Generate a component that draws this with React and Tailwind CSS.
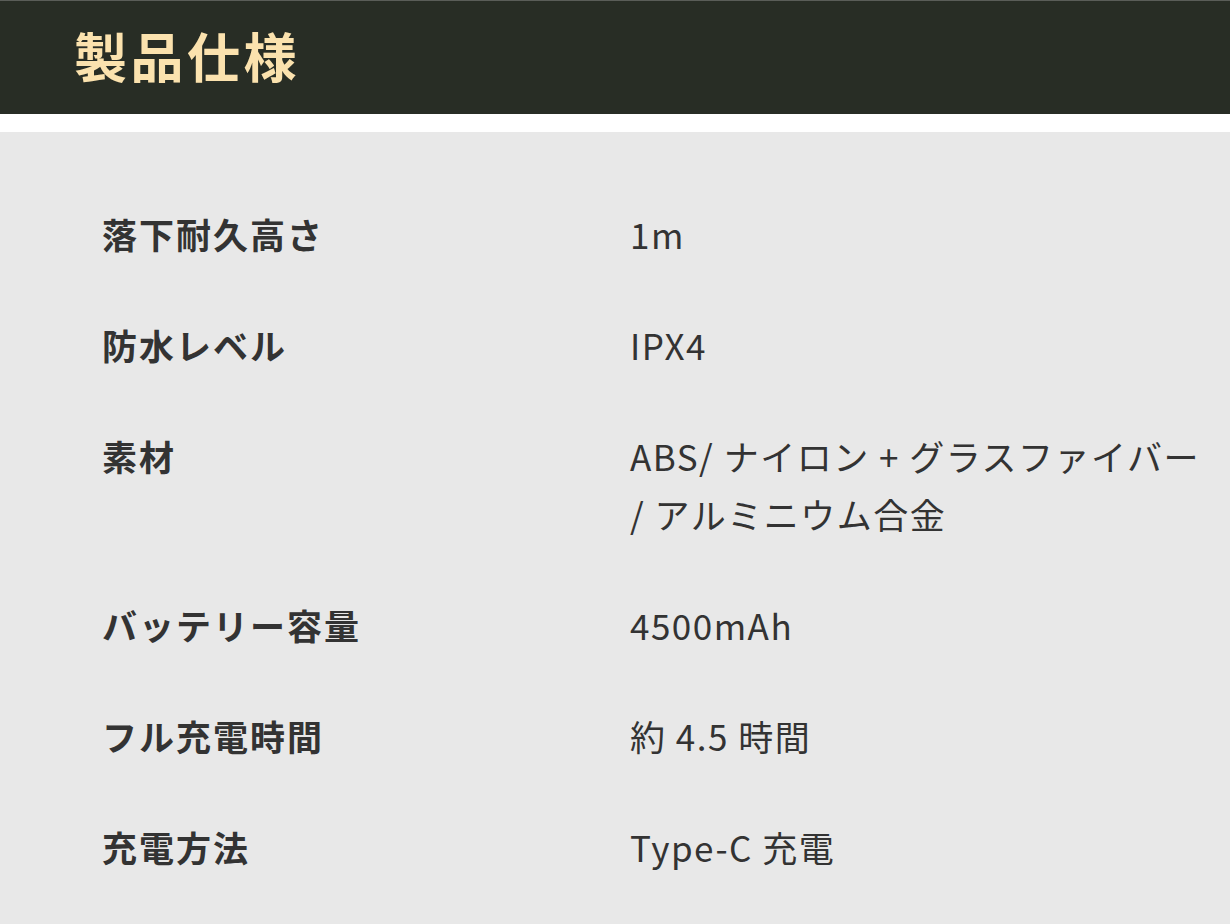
const specs = [
  { label: "落下耐久高さ", value: ["1m"] },
  { label: "防水レベル", value: ["IPX4"] },
  { label: "素材", value: ["ABS/ ナイロン + グラスファイバー", "/ アルミニウム合金"] },
  { label: "バッテリー容量", value: ["4500mAh"] },
  { label: "フル充電時間", value: ["約 4.5 時間"] },
  { label: "充電方法", value: ["Type-C 充電"] },
];

const App = () => {
  return (
    <div
      className="w-[1230px] h-[924px] overflow-hidden bg-white"
      style={{ fontFamily: '"Noto Sans CJK JP", "Noto Sans", sans-serif' }}
    >
      {/* Header */}
      <header className="h-[114px] bg-[#282d25] border-t border-[#5a5d58] flex items-center pl-[74px] pb-[4px]">
        <h2 className="text-[53px] font-bold tracking-[3.5px] text-[#fbe2ae] leading-none">
          製品仕様
        </h2>
      </header>

      {/* Spec table */}
      <section className="mt-[18px] h-full bg-[#e8e8e8] pt-[73px] pl-[102px]">
        <div className="flex flex-col gap-[53px] text-[35px] leading-[58px] tracking-[1.5px] text-[#333333]">
          {specs.map((s) => (
            <div key={s.label} className="grid grid-cols-[528px_1fr]">
              <p className="font-bold tracking-[2px]">{s.label}</p>
              <div>
                {s.value.map((line) => (
                  <p key={line}>{line}</p>
                ))}
              </div>
            </div>
          ))}
        </div>
      </section>
    </div>
  );
};

export default App;
